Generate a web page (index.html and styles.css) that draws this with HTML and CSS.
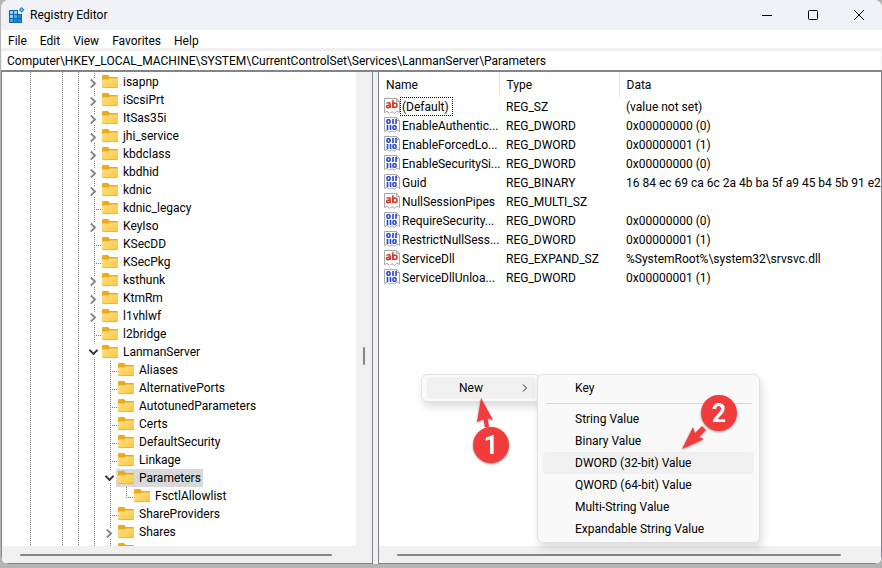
FILE: index.html
```html
<!DOCTYPE html>
<html lang="en">
<head>
  <meta charset="utf-8">
  <title>Registry Editor</title>
  <link rel="stylesheet" href="styles.css">
</head>

<body>
<!-- shared icons -->
<svg class="defs" width="0" height="0">
  <defs>
    <linearGradient id="folderFill" x1="0" y1="0" x2="1" y2="1">
      <stop offset="0" stop-color="#ffe08a"/>
      <stop offset="1" stop-color="#fcc63c"/>
    </linearGradient>
    <symbol id="folder" viewBox="0 0 16 16">
      <path d="M0 2.200Q0 1 1.200 1H6L8 3H15Q16 3 16 4V7H0Z" fill="#eda916"/>
      <path d="M0 5.500H6.400L8 4.500H15.200Q16 4.500 16 5.300V13Q16 14 15 14H1Q0 14 0 13Z" fill="url(#folderFill)"/>
      <path d="M.5 13.600H15.500" stroke="#eeb02a" stroke-width=".8"/>
    </symbol>
    <symbol id="page" viewBox="0 0 16 16">
      <path d="M.5 .5H12.500L15.500 3.500V14.500L13 13L10.500 15.300L8 13.800L5.500 15.300L3 13.300L.5 14.500Z" fill="#fff" stroke="#a9a9a9"/>
      <path d="M12.500 .5V3.500H15.500" fill="none" stroke="#a9a9a9"/>
    </symbol>
    <symbol id="str" viewBox="0 0 16 16">
      <use href="#page"/>
      <g fill="none" stroke="#d03f2e" stroke-width="1.600">
        <path d="M2.600 5.300Q6.200 3.800 6.200 6.300V10M6.200 7.300H4.200Q2.500 7.400 2.500 8.500Q2.600 9.700 4 9.600Q5.600 9.400 6.200 8.300"/>
        <path d="M8.800 2.200V10"/>
        <ellipse cx="10.900" cy="7.300" rx="2.100" ry="2.200"/>
      </g>
    </symbol>
    <symbol id="bin" viewBox="0 0 16 16">
      <use href="#page"/>
      <g fill="none" stroke="#2346d2" stroke-width="1.600">
        <rect x="3" y="2.800" width="3" height="3.400" rx="1"/>
        <path d="M9 2V7M12 2V7M3.500 8V13M6.500 8V13"/>
        <rect x="9" y="8.800" width="3" height="3.400" rx="1"/>
      </g>
    </symbol>
  </defs>
</svg>

<div class="window">
  <header class="titlebar">
    <svg class="app-icon" viewBox="0 0 16 16">
      <path d="M0 3H9V7H13V16H0Z" fill="#1565b0"/>
      <path d="M1 4H4V7H1ZM5 4H8V7H5ZM1 8H4V11H1Z" fill="#7fd0fb"/>
      <path d="M5 8H8V11H5ZM1 12H4V15H1Z" fill="#3fa9ee"/>
      <path d="M9 8H12V11H9ZM5 12H8V15H5ZM9 12H12V15H9Z" fill="#2386d3"/>
      <path d="M12.500 0L15.500 2.700L12.800 5.700L9.800 3Z" fill="#1a82cf"/>
      <path d="M12.700 1.800L13.800 2.800L12.700 3.900L11.600 2.900Z" fill="#c6ecff"/>
    </svg>
    <h1>Registry Editor</h1>
    <div class="controls">
      <button aria-label="Minimize"><svg viewBox="0 0 10 10"><path d="M0 5.500H10"/></svg></button>
      <button aria-label="Maximize"><svg viewBox="0 0 10 10"><rect x=".5" y=".5" width="9" height="9" rx="1"/></svg></button>
      <button aria-label="Close"><svg viewBox="0 0 10 10"><path d="M0 0L10 10M10 0L0 10"/></svg></button>
    </div>
  </header>

  <nav class="menubar">
    <button>File</button>
    <button>Edit</button>
    <button>View</button>
    <button>Favorites</button>
    <button>Help</button>
  </nav>

  <input class="address" type="text" aria-label="Address" value="Computer\HKEY_LOCAL_MACHINE\SYSTEM\CurrentControlSet\Services\LanmanServer\Parameters">

  <main class="panes">
    <section class="pane tree-pane">
      <div class="tree">
        <ul>
          <li><div class="node closed"><svg><use href="#folder"/></svg><span>isapnp</span></div></li>
          <li><div class="node closed"><svg><use href="#folder"/></svg><span>iScsiPrt</span></div></li>
          <li><div class="node closed"><svg><use href="#folder"/></svg><span>ItSas35i</span></div></li>
          <li><div class="node closed"><svg><use href="#folder"/></svg><span>jhi_service</span></div></li>
          <li><div class="node closed"><svg><use href="#folder"/></svg><span>kbdclass</span></div></li>
          <li><div class="node closed"><svg><use href="#folder"/></svg><span>kbdhid</span></div></li>
          <li><div class="node closed"><svg><use href="#folder"/></svg><span>kdnic</span></div></li>
          <li><div class="node"><svg><use href="#folder"/></svg><span>kdnic_legacy</span></div></li>
          <li><div class="node closed"><svg><use href="#folder"/></svg><span>KeyIso</span></div></li>
          <li><div class="node"><svg><use href="#folder"/></svg><span>KSecDD</span></div></li>
          <li><div class="node"><svg><use href="#folder"/></svg><span>KSecPkg</span></div></li>
          <li><div class="node closed"><svg><use href="#folder"/></svg><span>ksthunk</span></div></li>
          <li><div class="node closed"><svg><use href="#folder"/></svg><span>KtmRm</span></div></li>
          <li><div class="node closed"><svg><use href="#folder"/></svg><span>l1vhlwf</span></div></li>
          <li><div class="node"><svg><use href="#folder"/></svg><span>l2bridge</span></div></li>
          <li><div class="node open"><svg><use href="#folder"/></svg><span>LanmanServer</span></div>
            <ul>
              <li><div class="node"><svg><use href="#folder"/></svg><span>Aliases</span></div></li>
              <li><div class="node"><svg><use href="#folder"/></svg><span>AlternativePorts</span></div></li>
              <li><div class="node"><svg><use href="#folder"/></svg><span>AutotunedParameters</span></div></li>
              <li><div class="node"><svg><use href="#folder"/></svg><span>Certs</span></div></li>
              <li><div class="node"><svg><use href="#folder"/></svg><span>DefaultSecurity</span></div></li>
              <li><div class="node"><svg><use href="#folder"/></svg><span>Linkage</span></div></li>
              <li><div class="node open selected"><svg><use href="#folder"/></svg><span>Parameters</span></div>
                <ul class="last">
                  <li><div class="node"><svg><use href="#folder"/></svg><span>FsctlAllowlist</span></div></li>
                </ul>
              </li>
              <li><div class="node"><svg><use href="#folder"/></svg><span>ShareProviders</span></div></li>
              <li><div class="node closed"><svg><use href="#folder"/></svg><span>Shares</span></div></li>
              <li><div class="node"><svg><use href="#folder"/></svg></div></li>
            </ul>
          </li>
        </ul>
      </div>
      <div class="vscroll"><div class="thumb"></div></div>
      <div class="hscroll"><div class="thumb"></div></div>
    </section>

    <section class="pane value-pane">
      <div class="values">
        <table>
          <colgroup><col class="c-name"><col class="c-type"><col></colgroup>
          <thead>
            <tr><th>Name</th><th>Type</th><th>Data</th></tr>
          </thead>
          <tbody>
            <tr><td><div class="name"><svg><use href="#str"/></svg><span class="focus">(Default)</span></div></td><td>REG_SZ</td><td>(value not set)</td></tr>
            <tr><td><div class="name"><svg><use href="#bin"/></svg><span>EnableAuthentic...</span></div></td><td>REG_DWORD</td><td>0x00000000 (0)</td></tr>
            <tr><td><div class="name"><svg><use href="#bin"/></svg><span>EnableForcedLo...</span></div></td><td>REG_DWORD</td><td>0x00000001 (1)</td></tr>
            <tr><td><div class="name"><svg><use href="#bin"/></svg><span>EnableSecuritySi...</span></div></td><td>REG_DWORD</td><td>0x00000000 (0)</td></tr>
            <tr><td><div class="name"><svg><use href="#bin"/></svg><span>Guid</span></div></td><td>REG_BINARY</td><td>16 84 ec 69 ca 6c 2a 4b ba 5f a9 45 b4 5b 91 e2</td></tr>
            <tr><td><div class="name"><svg><use href="#str"/></svg><span>NullSessionPipes</span></div></td><td>REG_MULTI_SZ</td><td></td></tr>
            <tr><td><div class="name"><svg><use href="#bin"/></svg><span>RequireSecurity...</span></div></td><td>REG_DWORD</td><td>0x00000000 (0)</td></tr>
            <tr><td><div class="name"><svg><use href="#bin"/></svg><span>RestrictNullSess...</span></div></td><td>REG_DWORD</td><td>0x00000001 (1)</td></tr>
            <tr><td><div class="name"><svg><use href="#str"/></svg><span>ServiceDll</span></div></td><td>REG_EXPAND_SZ</td><td>%SystemRoot%\system32\srvsvc.dll</td></tr>
            <tr><td><div class="name"><svg><use href="#bin"/></svg><span>ServiceDllUnloa...</span></div></td><td>REG_DWORD</td><td>0x00000001 (1)</td></tr>
          </tbody>
        </table>
      </div>
      <div class="hscroll"><div class="thumb"></div></div>
    </section>
  </main>
</div>

<!-- context menu -->
<div class="popup context">
  <button class="hover">New
    <svg viewBox="0 0 6 8"><path d="M1 .5L4.500 4L1 7.500"/></svg>
  </button>
</div>
<div class="popup submenu">
  <button>Key</button>
  <hr>
  <button>String Value</button>
  <button>Binary Value</button>
  <button class="hover">DWORD (32-bit) Value</button>
  <button>QWORD (64-bit) Value</button>
  <button>Multi-String Value</button>
  <button>Expandable String Value</button>
</div>

<!-- step markers -->
<svg class="marker step1" viewBox="0 0 40 68">
  <path d="M11 1L23 23L17.500 21L19 30H15L13.500 22L7 25Z"/>
  <circle cx="21" cy="48" r="18"/>
  <text x="21" y="57">1</text>
</svg>
<svg class="marker step2" viewBox="0 0 58 58">
  <path d="M2 54L13 32L15 38L22 31L26 35L19 42L24 44Z"/>
  <circle cx="39" cy="18" r="18"/>
  <text x="39" y="27">2</text>
</svg>
</body>
</html>
```

FILE: styles.css
```css
* {
  box-sizing: border-box;
}
body {
  margin: 0;
  height: 100vh;
  padding: 0 0 4px 1px;
  background: #b4b4b4;
  color: #000;
  font: 12px/18px Roboto, "Open Sans", sans-serif;
  overflow: hidden;
}
button, input {
  font: inherit;
  color: inherit;
  border: 0;
  padding: 0;
  background: none;
}
ul {
  list-style: none;
  margin: 0;
  padding: 0;
}
.defs {
  position: absolute;
}

/* window frame */
.window {
  display: flex;
  flex-direction: column;
  height: 100%;
  border-radius: 8px;
  overflow: hidden;
  background: #f0f0f0;
}
.titlebar {
  display: flex;
  align-items: center;
  height: 30px;
  flex: none;
  padding-left: 8px;
  background: #f0f2f8;
}
.app-icon {
  width: 16px;
  height: 16px;
}
.titlebar h1 {
  flex: 1;
  margin: 0 0 0 5px;
  font-size: 12px;
  font-weight: normal;
}
.controls {
  display: flex;
}
.controls button {
  width: 46px;
  height: 28px;
}
.controls svg {
  display: block;
  width: 10px;
  height: 10px;
  margin: auto;
  overflow: visible;
  fill: none;
  stroke: #000;
}
.menubar {
  display: flex;
  flex: none;
  gap: 13px;
  height: 18px;
  padding-left: 7px;
  background: #fff;
}
.menubar button {
  padding-top: 2px;
}
.address {
  flex: none;
  height: 19px;
  margin: 3px 1px 0 1px;
  padding-left: 5px;
  background: #fff;
}

/* panes */
.panes {
  display: flex;
  flex: 1;
  min-height: 0;
  border-top: 2px solid #838389;
}
.pane {
  display: grid;
  min-width: 0;
  border: 1px solid #838389;
  border-top: 0;
  background: #fff;
}
.tree-pane {
  flex: 0 0 372px;
  grid-template: 1fr 17px / 1fr 16px;
}
.value-pane {
  flex: 1;
  margin-left: 5px;
  grid-template: 1fr 17px / 1fr;
}

/* tree, the backgrounds are the dotted ancestor lines */
.tree {
  overflow: hidden;
  padding: 1px 0 0 84px;
  background:
    repeating-linear-gradient(#777 0 1px, transparent 1px 2px) 28px 0 / 1px 100% no-repeat,
    repeating-linear-gradient(#777 0 1px, transparent 1px 2px) 60px 0 / 1px 100% no-repeat,
    repeating-linear-gradient(#777 0 1px, transparent 1px 2px) 76px 0 / 1px 100% no-repeat;
}
.tree ul {
  background: repeating-linear-gradient(#777 0 1px, transparent 1px 2px) 8px 0 / 1px 100% no-repeat;
}
.tree ul ul {
  margin-left: 16px;
}
.tree ul.last {
  background-size: 1px 10px;
}
.node {
  display: flex;
  height: 18px;
}
.node::before {
  content: "";
  box-sizing: border-box;
  width: 16px;
  background: repeating-linear-gradient(90deg, #777 0 1px, transparent 1px 2px) 8px 10px / 8px 1px no-repeat;
}
.node.closed::before,
.node.open::before {
  width: 7px;
  height: 7px;
  margin: 7px 7px 4px 2px;
  border: solid #868686;
  border-width: 2px 2px 0 0;
  background: #fff;
  transform: rotate(45deg);
  outline: 2px solid #fff;
}
.node.open::before {
  margin: 4px 5px 7px 4px;
  border-color: #333;
  transform: rotate(135deg);
}
.node svg {
  width: 16px;
  height: 16px;
  margin-top: 1px;
}
.node span {
  padding: 0 2px 0 5px;
}
.node.selected {
  width: max-content;
  background: linear-gradient(#d9d9d9, #d9d9d9) 14px 0 / 100% 100% no-repeat;
}

/* scrollbars */
.hscroll,
.vscroll {
  display: flex;
  align-items: center;
  justify-content: center;
  background: #f0f0f0;
}
.thumb {
  border-radius: 1px;
  background: #858585;
}
.hscroll {
  grid-column: 1 / -1;
}
.hscroll .thumb {
  flex: 1;
  height: 2px;
  margin: 0 40px 0 18px;
}
.vscroll .thumb {
  width: 2px;
  height: 18px;
  margin-top: 94px;
}

/* value list */
.values {
  overflow: hidden;
}
table {
  width: 100%;
  table-layout: fixed;
  border-collapse: collapse;
}
.c-name,
.c-type {
  width: 120px;
}
th {
  height: 25px;
  padding: 0 7px;
  border-right: 1px solid #e5e5e5;
  font-weight: normal;
  text-align: left;
}
th:last-child {
  border-right: 0;
}
td {
  height: 19px;
  padding: 0 0 0 7px;
  white-space: nowrap;
}
td:first-child {
  padding-left: 5px;
}
.name {
  display: flex;
  height: 19px;
  line-height: 20px;
}
.name svg {
  flex: none;
  width: 16px;
  height: 16px;
  margin-top: 1px;
}
.name span {
  padding: 0 4px 0 2px;
}
.name .focus {
  outline: 1px dotted #000;
  outline-offset: -1px;
}

/* menus */
.popup {
  position: absolute;
  display: flex;
  flex-direction: column;
  border: 1px solid #e2e2e2;
  border-radius: 6px;
  background: #f9f9f9;
  box-shadow: 2px 5px 8px rgba(0, 0, 0, 0.14);
}
.popup button {
  height: 22px;
  padding-left: 32px;
  border-radius: 4px;
  text-align: left;
}
.popup .hover {
  background: #f0f0f0;
}
.popup hr {
  width: 206px;
  margin: 4px 3px;
  border: 0;
  border-top: 1px solid #d4d4d4;
}
.context {
  left: 421px;
  top: 374px;
  width: 120px;
  padding: 2px 5px;
}
.context button {
  display: flex;
  align-items: center;
  justify-content: space-between;
  padding-right: 7px;
}
.context svg {
  width: 6px;
  height: 8px;
  overflow: visible;
  fill: none;
  stroke: #222;
}
.submenu {
  left: 537px;
  top: 374px;
  width: 223px;
  padding: 2px 5px;
}

/* numbered arrows */
.marker {
  position: absolute;
  fill: #f23b3b;
  filter: drop-shadow(0 1px 1px rgba(0, 0, 0, 0.4));
}
.marker text {
  fill: #fff;
  font: bold 25px Roboto, sans-serif;
  text-anchor: middle;
}
.step1 {
  left: 470px;
  top: 397px;
  width: 40px;
  height: 68px;
}
.step2 {
  left: 680px;
  top: 395px;
  width: 58px;
  height: 58px;
}
```
